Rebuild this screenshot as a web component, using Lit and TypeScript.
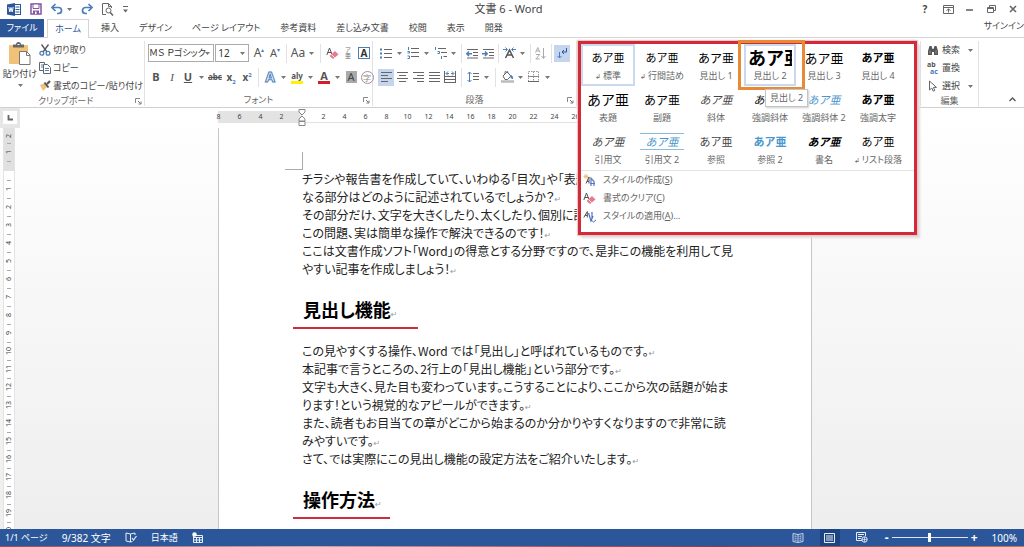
import { LitElement, html, svg, css, nothing } from "lit";
import { customElement } from "lit/decorators.js";
import { classMap } from "lit/directives/class-map.js";

const icon = (w: number, h: number, body: unknown) =>
  html`<svg width=${w} height=${h} viewBox="0 0 ${w} ${h}" fill="none" stroke="#666" aria-hidden="true">${body}</svg>`;

const caret = html`<svg class="caret" width="5" height="3" viewBox="0 0 5 3" aria-hidden="true"><path d="M0 0h5L2.500 3z" fill="#777" /></svg>`;

const I = {
  word: icon(14, 13, svg`<rect x="6.500" y="1.500" width="7" height="10" fill="#fff" stroke="#2b579a"/><path d="M8.500 4h4M8.500 6.500h4M8.500 9h4" stroke="#2b579a"/><path d="M0 1.500 8 0v13L0 11.500z" fill="#2b579a" stroke="none"/><path d="m1.800 4 1 5 1.200-4.500L5.200 9l1-5" stroke="#fff"/>`),
  save: icon(12, 12, svg`<path d="M1 1h10v10H1z" stroke="#8356a6" stroke-width="1.500"/><path d="M3 1h6v4.500H3z" fill="#fff" stroke="#8356a6"/><path d="M3 7.500h6V11H3z" fill="#8356a6" stroke="none"/><path d="M5 8.500h1.500V11H5z" fill="#fff" stroke="none"/>`),
  undo: icon(12, 12, svg`<path d="M1.500 4.500h6a3 3 0 0 1 0 6H6" stroke="#4a7ebb" stroke-width="1.700"/><path d="M4.500 1 1 4.500 4.500 8" stroke="#4a7ebb" stroke-width="1.700"/>`),
  redo: icon(12, 12, svg`<path d="M10.500 4.500h-6a3 3 0 0 0 0 6H6" stroke="#4a7ebb" stroke-width="1.700"/><path d="M7.500 1 11 4.500 7.500 8" stroke="#4a7ebb" stroke-width="1.700"/>`),
  preview: icon(12, 13, svg`<path d="M4 11.500H.500v-11h6l3 3V5M6.500.500v3h3"/><circle cx="6.500" cy="7.500" r="2.500"/><path d="m8.300 9.500 2.700 3" stroke-width="1.600"/>`),
  more: icon(5, 7, svg`<path d="M0 .500h5"/><path d="M0 3.500h5L2.500 6.500z" fill="#666" stroke="none"/>`),
  opts: icon(11, 9, svg`<path d="M.500.500h10v8H.500zM.500 2.500h10M5.500 7.500V4M3.500 5.500l2-1.500 2 1.500"/>`),
  min: icon(7, 9, svg`<path d="M0 5h7" stroke-width="1.600"/>`),
  restore: icon(9, 8, svg`<path d="M.500 2.500h6v5h-6zM2.500 2.500v-2h6v5h-2"/><path d="M.500 3.500h6"/>`),
  close: icon(8, 8, svg`<path d="m1 1 6 6M7 1 1 7" stroke-width="1.600"/>`),
  paste: icon(24, 24, svg`<rect x="1" y="3" width="19" height="19" rx="1" fill="#efc277" stroke="none"/><path d="M5 5.500v-3h3a2.500 2.500 0 0 1 5 0h3v3z" fill="#666" stroke="none"/><path d="M9.500 2.500h2" stroke="#fff"/><path d="M11.500 9.500h7l3.500 3.500v9.500H11.500z" fill="#fff" stroke="#777"/><path d="M18.500 9.500v4H22" stroke="#777"/>`),
  cut: icon(12, 12, svg`<path d="M2.500.500 8 8M9.500.500 4 8" stroke="#555" stroke-width="1.300"/><circle cx="2.800" cy="9.300" r="1.900" stroke="#4a7ebb" stroke-width="1.300"/><circle cx="9" cy="9.300" r="1.900" stroke="#4a7ebb" stroke-width="1.300"/>`),
  copy: icon(12, 12, svg`<path d="M.500.500h5v8h-5z" fill="#fff"/><path d="M2 3h2M2 5h2" stroke="#4a7ebb"/><path d="M4.500 2.500h4l3 3v6h-7z" fill="#fff"/><path d="M6 6.500h4M6 8.500h4" stroke="#4a7ebb"/>`),
  brush: icon(12, 12, svg`<path d="M1 5 6 3l2 4-4 4z" fill="#efc277" stroke="none"/><path d="m5.500 2.500 4 5" stroke="#555" stroke-width="2"/><path d="m8 4 3-3" stroke="#555" stroke-width="2.200"/>`),
  clear: icon(13, 13, svg`<path d="m.800 8 2.700-7 2.700 7M1.700 5.500h3.600" stroke="#555"/><path d="m3.500 9 5.500-5 3.500 3.500-5.500 4.500z" fill="#e8798f" stroke="none"/><path d="m5.300 7.300 3.500 3.500" stroke="#fff" stroke-width=".800"/>`),
  bullets: icon(12, 11, svg`<path d="M0 1.500h2M0 5.500h2M0 9.500h2" stroke="#4a7ebb" stroke-width="2"/><path d="M4 1.500h8M4 5.500h8M4 9.500h8"/>`),
  numbers: icon(12, 12, svg`<path d="M1.500 0v3M.500 4.500h2v1.500h-2M.500 9h2v2.500h-2" stroke="#4a7ebb"/><path d="M4 1.500h8M4 5.500h8M4 9.500h8"/>`),
  multi: icon(13, 12, svg`<path d="M1.500 0v3M3.500 4.500h2v2h-2M7.500 9v3" stroke="#4a7ebb"/><path d="M4 1.500h8M7 5.500h6M9.500 9.500h3.500"/>`),
  outdent: icon(12, 11, svg`<path d="M1 1.500h11M7 4.500h5M7 7.500h5M1 10h11"/><path d="M6 5.800H1M3 3.500.800 5.800 3 8" stroke="#4a7ebb" stroke-width="1.500"/>`),
  indent: icon(12, 11, svg`<path d="M1 1.500h11M7 4.500h5M7 7.500h5M1 10h11"/><path d="M0 5.800h5M3 3.500l2.200 2.300L3 8" stroke="#4a7ebb" stroke-width="1.500"/>`),
  asian: icon(13, 12, svg`<path d="m2.500 11 4-8 4 8M4 8h5" stroke="#555" stroke-width="1.500"/><path d="M0 2.500h4M2.500.500 4.500 2.500 2.500 4.500M13 2.500H9M10.500.500 8.500 2.500l2 2" stroke="#4a7ebb"/>`),
  sort: icon(12, 13, svg`<path d="m.500 5.500 2.300-5 2.200 5M1.300 4h3M.800 7.500h4l-4 4.500h4" stroke="#aaa"/><path d="M8.500 1v10M6.500 9l2 2.500 2-2.500" stroke="#aaa"/>`),
  marks: icon(12, 12, svg`<path d="M10.500 1v4H6M8 3 6 5l2 2" stroke="#2b579a"/><path d="M3.500 5v6M1.500 9l2 2 2-2" stroke="#4a7ebb"/>`),
  left: icon(11, 11, svg`<path d="M0 .500h11M0 3.500h7M0 6.500h11M0 9.500h7"/>`),
  center: icon(11, 11, svg`<path d="M0 .500h11M2 3.500h7M0 6.500h11M2 9.500h7"/>`),
  right: icon(11, 11, svg`<path d="M0 .500h11M4 3.500h7M0 6.500h11M4 9.500h7"/>`),
  justify: icon(11, 11, svg`<path d="M0 .500h11M0 3.500h11M0 6.500h11M0 9.500h11"/>`),
  distribute: icon(12, 12, svg`<path d="M.500 0v12M11.500 0v12M1 5.500h10M1 8.500h10M1 11.500h10"/><path d="M2.500 2.500h2.500M7 2.500h2.500M4 .500l-2 2 2 2M8 .500l2 2-2 2" stroke="#4a7ebb"/>`),
  spacing: icon(12, 12, svg`<path d="M2.500 1v10M.500 3l2-2 2 2M.500 9l2 2 2-2" stroke="#4a7ebb"/><path d="M6 2.500h6M6 5.500h6M6 8.500h6"/>`),
  shade: icon(13, 12, svg`<path d="m2 5 4-4 4 4-3.500 3.500H4z" fill="#fff"/><path d="M4 3V1.500a1.500 1.500 0 0 1 3 0"/><path d="M9 4.500c2 0 3 1 2.500 3.500L10 6.500z" fill="#4a7ebb" stroke="#4a7ebb"/><path d="M0 10.500h13" stroke="#bbb" stroke-width="2.500"/>`),
  borders: icon(12, 12, svg`<path d="M.500.500h10v10H.500zM5.500.500v10" stroke="#999" stroke-dasharray="1.500 1"/><path d="M0 5.500h11" stroke="#888"/><path d="M0 10.500h11" stroke="#666"/>`),
  launcher: icon(7, 7, svg`<path d="M.500 5V.500H5" stroke="#888"/><path d="m3 3 2.500 2.500M6 3.500V6H3.500" stroke="#777"/>`),
  find: icon(12, 11, svg`<path d="M1 10V6l1.500-5h2L5.500 4h1L7.500 1h2L11 6v4H7V7H5v3z" fill="#555" stroke="none"/><path d="M3 5.500v3M9 5.500v3" stroke="#aaa" stroke-width=".800"/>`),
  select: icon(9, 12, svg`<path d="M1 1v9l2.300-2 1.500 3.200 1.500-.700L5 7.400h3z"/>`),
  up: icon(7, 5, svg`<path d="m.500 4 3-3 3 3" stroke="#555" stroke-width="1.300"/>`),
  newStyle: icon(13, 13, svg`<path d="M3 0v5M.500 2.500h5M1 .800 5 4M5 .800 1 4" stroke="#eab765" stroke-width=".800"/><path d="m3 9.500 3-6.500v6.500M4 7.500h2" stroke="#555"/><path d="M8 12V4l3 3.500V12M7 9.500h5" stroke="#5a78c0" stroke-width="1.200"/>`),
  applyStyle: icon(13, 13, svg`<path d="m.800 7.500 3.500-6v6M2 5.500h2.300" stroke="#555"/><path d="M5.500 3 8 11l2-5M9 2v7" stroke="#4a6fc0" stroke-width="1.200"/><path d="m8 10 2.500 2L13 10" stroke="#4a6fc0"/>`),
  tabstop: icon(6, 6, svg`<path d="M1.500 0v4.500H6" stroke="#666" stroke-width="1.800"/>`),
  hanging: icon(8, 18, svg`<path d="M1 .500h6v2.500L4 6 1 3zM1 12v-2l3-3 3 3v2zM1 12.500h6v4H1z" fill="#fff" stroke="#888"/>`),
  proof: icon(12, 11, svg`<path d="M5.500 2 1 1v8l4.500 1zV10M5.500 2l4.500-1v2M5.500 10l2-.500" stroke="#e8eef8"/><path d="m7 6 1.500 2 3-4" stroke="#e8eef8" stroke-width="1.200"/>`),
  macro: icon(11, 11, svg`<path d="M1.500 3.500h9v7h-9zM1.500 5.500h9M4.500 5.500v5M7.500 5.500v5M2 8h8" stroke="#e8eef8"/><circle cx="2.500" cy="2.500" r="2.200" fill="#fff" stroke="none"/>`),
  read: icon(12, 10, svg`<path d="M6 1.500 1 .500v8l5 1 5-1v-8zV9.500M2.500 3l2 .300M2.500 5l2 .300M2.500 7l2 .300M9.500 3l-2 .300M9.500 5l-2 .300M9.500 7l-2 .300" stroke="#c9d6ec"/>`),
  print: icon(11, 10, svg`<path d="M.500.500h10v9H.500zM2 3h7M2 5h7M2 7h7" stroke="#e8eef8"/>`),
  web: icon(12, 11, svg`<path d="M6 8.500H.500v-8h9V4M2 2.500h6M2 4.500h4M2 6.500h3" stroke="#e8eef8"/><circle cx="8.500" cy="7.500" r="2.700" fill="#2b579a" stroke="#e8eef8"/><path d="M6 7.500h5M8.500 5v5" stroke="#e8eef8" stroke-width=".700"/>`),
};

type Tool = { label: string; body: unknown; drop?: boolean; on?: boolean; sep?: boolean };
const t = (label: string, body: unknown, extra: Partial<Tool> = {}): Tool => ({ label, body, ...extra });

const fontRow1: Tool[] = [
  t("フォント サイズの拡大", html`<span class="ltr">A<sup class="tick">▴</sup></span>`),
  t("フォント サイズの縮小", html`<span class="ltr small">A<sup class="tick">▾</sup></span>`, { sep: true }),
  t("文字種の変換", html`<span class="ltr">Aa</span>`, { drop: true, sep: true }),
  t("書式のクリア", I.clear),
  t("ルビ", html`<span class="ruby"><i>ア</i><i>亜</i></span>`),
  t("囲み線", html`<span class="boxed">A</span>`),
];
const fontRow2: Tool[] = [
  t("太字", html`<b class="ltr small">B</b>`),
  t("斜体", html`<i class="ltr small serif">I</i>`),
  t("下線", html`<u class="ltr small"><b>U</b></u>`, { drop: true }),
  t("取り消し線", html`<s class="abc">abc</s>`),
  t("下付き", html`<span class="xs">x<sub>2</sub></span>`),
  t("上付き", html`<span class="xs">x<sup>2</sup></span>`, { sep: true }),
  t("文字の効果", html`<span class="ltr fx">A</span>`, { drop: true }),
  t("蛍光ペン", html`<span class="abc bar yellow">aly</span>`, { drop: true }),
  t("フォントの色", html`<span class="abc bar red">A</span>`, { drop: true }),
  t("文字の網かけ", html`<span class="shaded">A</span>`),
  t("囲い文字", html`<span class="circled">字</span>`),
];
const paraRow1: Tool[] = [
  t("箇条書き", I.bullets, { drop: true }),
  t("段落番号", I.numbers, { drop: true }),
  t("アウトライン", I.multi, { drop: true, sep: true }),
  t("インデントを減らす", I.outdent),
  t("インデントを増やす", I.indent, { sep: true }),
  t("拡張書式", I.asian, { drop: true, sep: true }),
  t("並べ替え", I.sort, { sep: true }),
  t("編集記号の表示", I.marks, { on: true }),
];
const paraRow2: Tool[] = [
  t("左揃え", I.left, { on: true }),
  t("中央揃え", I.center),
  t("右揃え", I.right),
  t("両端揃え", I.justify),
  t("均等割り付け", I.distribute, { sep: true }),
  t("行間", I.spacing, { drop: true, sep: true }),
  t("塗りつぶし", I.shade, { drop: true }),
  t("罫線", I.borders, { drop: true }),
];

const gallery: [string, string][] = [
  ["標準", "current linked"], ["行間詰め", "linked"], ["見出し 1", "big"], ["見出し 2", "huge hover"], ["見出し 3", "wide"], ["見出し 4", "bold"],
  ["表題", "title"], ["副題", "big"], ["斜体", "ital grey"], ["強調斜体", "ital"], ["強調斜体 2", "ital blue"], ["強調太字", "bold"],
  ["引用文", "ital grey"], ["引用文 2", "ital blue ruled"], ["参照", "grey"], ["参照 2", "blue bold"], ["書名", "bold ital"], ["リスト段落", "linked"],
];

const intro: [string, boolean][] = [
  ["チラシや報告書を作成していて、いわゆる「目次」や「表題", false],
  ["なる部分はどのように記述されているでしょうか？", true],
  ["その部分だけ、文字を大きくしたり、太くしたり、個別に設定", false],
  ["この問題、実は簡単な操作で解決できるのです！", true],
  ["ここは文書作成ソフト「Word」の得意とする分野ですので、是非この機能を利用して見", false],
  ["やすい記事を作成しましょう！", true],
];
const detail: [string, boolean][] = [
  ["この見やすくする操作、Word では「見出し」と呼ばれているものです。", true],
  ["本記事で言うところの、2行上の「見出し機能」という部分です。", true],
  ["文字も大きく、見た目も変わっています。こうすることにより、ここから次の話題が始ま", false],
  ["ります！という視覚的なアピールができます。", true],
  ["また、読者もお目当ての章がどこから始まるのか分かりやすくなりますので非常に読", false],
  ["みやすいです。", true],
  ["さて、では実際にこの見出し機能の設定方法をご紹介いたします。", true],
];

@customElement("app-root")
export class AppRoot extends LitElement {
  static styles = css`
    :host { display: flex; flex-direction: column; height: 100vh; overflow: hidden; background: #fff; color: #444;
      font: 9px/14px "Noto Sans", "Noto Sans CJK JP", sans-serif; font-feature-settings: "palt"; white-space: nowrap; }
    * { box-sizing: border-box; }
    button { font: inherit; font-feature-settings: inherit; color: inherit; background: none; border: 0; padding: 0; margin: 0; white-space: nowrap; }
    svg { display: block; flex: none; }
    h1, h2, p { margin: 0; font-weight: 400; }

    .titlebar { display: grid; grid-template-columns: 1fr auto 1fr; align-items: center; height: 18px; padding: 0 7px; flex: none; }
    .quick, .window { display: flex; align-items: center; }
    .quick { gap: 9px; }
    .quick .pair { display: flex; align-items: center; gap: 4px; }
    .window { justify-content: flex-end; gap: 14px; }
    .window button { display: grid; place-items: center; width: 8px; font-size: 10px; }
    .titlebar h1 { font-size: 11px; line-height: 18px; padding-right: 7px; }

    .tabs { display: flex; align-items: stretch; height: 20px; flex: none; border-bottom: 1px solid #d5d5d5; padding-top: 1px; }
    .tabs .file { width: 44px; background: #2b579a; color: #fff; }
    .tabs .home { width: 42px; margin: 0 12px -1px 3px; border: 1px solid #d5d5d5; border-bottom: 0; color: #2b579a; background: #fff; }
    .tabs .rest { display: flex; gap: 20px; flex: 1; }
    .tabs .signin { color: #444; text-decoration: none; }

    .ribbon { display: flex; height: 70px; flex: none; border-bottom: 1px solid #d0d0d0; padding: 3px 0 1px; }
    .group { display: flex; flex-direction: column; border-right: 1px solid #e2e2e2; flex: none; }
    .group .content { flex: 1; }
    .group .foot { display: grid; grid-template-columns: 1fr auto 1fr; align-items: center; height: 12px; line-height: 12px; color: #666; }
    .group .foot button { grid-column: 3; justify-self: end; margin-right: 2px; }
    .group .foot span { grid-column: 2; }
    .clip { width: 145px; }
    .clip .content { display: flex; gap: 1px; padding-left: 2px; }
    .clip .foot { grid-template-columns: 3fr auto 4fr; }
    .paste { display: flex; flex-direction: column; align-items: center; width: 36px; padding-top: 1px; }
    .paste span { margin: 1px 0 3px; }
    .stack { display: flex; flex-direction: column; }
    .stack button { display: flex; align-items: center; gap: 2px; height: 18px; line-height: 18px; }
    .stack .caret { margin-left: 5px; }
    .font { width: 228px; }
    .para { width: 204px; }
    .tools { display: flex; align-items: center; height: 24px; }
    .font .tools { padding-left: 3px; }
    .para .tools { padding-left: 5px; }
    .tool { display: flex; align-items: center; height: 17px; flex: none; }
    .tool .face { display: grid; place-items: center; width: 16px; height: 17px; }
    .tool.on .face { background: #c5d5ee; }
    .tool .caret { margin: 0 3px; }
    .rule { width: 1px; height: 19px; background: #e2e2e2; margin: 0 3px; flex: none; }
    .para .tools:first-child .rule { margin: 0 2px; }
    .combo { position: relative; display: flex; align-items: center; border: 1px solid #ababab; height: 18px; margin-right: 1px; }
    .combo select { appearance: none; border: 0; background: none; font: inherit; font-feature-settings: inherit; color: #333; width: 100%; height: 16px; padding: 0 2px; outline: 0; }
    .combo .caret { position: absolute; right: 3px; pointer-events: none; }
    .family { width: 69px; }
    .family select { padding: 0; }
    .size { width: 35px; margin-right: 2px; font-size: 10px; }
    .ltr { font-size: 12px; line-height: 16px; color: #555; }
    .small { font-size: 11px; }
    .serif { font-family: "Liberation Serif", serif; }
    .tick { font-size: 6px; line-height: 1px; color: #4a7ebb; }
    .abc { font-size: 9px; font-weight: 700; line-height: 12px; color: #555; }
    s.abc { font-size: 8px; }
    .xs { font-size: 10px; font-weight: 700; line-height: 12px; color: #555; }
    .xs sub, .xs sup { font-size: 6px; line-height: 1px; color: #4a7ebb; }
    .fx { color: #fff; font-size: 14px; font-weight: 700; -webkit-text-stroke: 1px #4a7ebb; }
    .bar { width: 12px; text-align: center; line-height: 10px; border-bottom: 3px solid; }
    .yellow { border-color: #fff200; font-size: 8px; }
    .red { border-color: #d0202c; font-size: 11px; }
    .shaded { width: 11px; line-height: 12px; text-align: center; background: #aaa; color: #444; font-size: 11px; }
    .boxed { width: 12px; line-height: 10px; text-align: center; border: 1px solid #4a7ebb; color: #333; font-size: 10px; font-weight: 700; }
    .circled { width: 13px; height: 13px; line-height: 11px; text-align: center; border: 1px solid #a98aa5; border-radius: 50%; font-size: 8px; color: #888; }
    .ruby { display: grid; line-height: 6px; font-size: 6px; color: #777; }
    .ruby i { font-style: normal; }
    .styles { position: relative; flex: 1; min-width: 343px; border-right: 1px solid #e2e2e2; }
    .edit { width: 58px; padding-left: 6px; }
    .edit .foot { margin-left: -6px; }
    .edit .stack button, .edit.group .stack button { gap: 3px; }
    .edit .stack button svg:first-child { width: 12px; }
    .edit .replace { font-size: 7px; line-height: 7px; width: 12px; text-align: left; color: #555; font-weight: 700; display: grid; }
    .edit .replace i { font-style: normal; color: #4a7ebb; padding-left: 3px; }
    .collapse { align-self: flex-end; width: 45px; display: grid; justify-content: end; padding: 0 8px 4px 0; }

    .dropdown { position: absolute; z-index: 5; top: 0; left: 1px; width: 339px; border: 3px solid #cf2b38; box-shadow: 0 0 1px 1px #f3c4c8, 3px 3px 2px #ddd; background: #fff; padding-bottom: 7px; }
    .grid { display: grid; grid-template-columns: repeat(6, 54px); grid-auto-rows: 42px; border-bottom: 1px solid #e4e4e4; }
    .cell { position: relative; display: flex; flex-direction: column; align-items: center; border: 2px solid transparent; }
    .cell .sample { width: 44px; height: 23px; line-height: 23px; font-size: 11px; color: #000; overflow: hidden; font-feature-settings: normal; text-align: center; font-family: "Noto Sans CJK JP", sans-serif; }
    .cell .name { color: #666; line-height: 14px; }
    .cell.linked .name::before { content: "↲ "; font-size: 7px; }
    .cell.current { border-color: #ccd8f0; }
    .cell.hover { border-color: #ccd8f0; margin: 0 1px; }
    .cell.big .sample { font-size: 12px; }
    .cell.wide .sample { font-size: 13px; }
    .cell.title .sample { font-size: 14px; }
    .cell.huge .sample { font-size: 18px; font-weight: 700; text-align: left; }
    .cell.bold .sample { font-weight: 700; }
    .cell.ital .sample { font-style: italic; }
    .cell.grey .sample { color: #444; }
    .cell.blue .sample { color: #4a96cc; }
    .cell.ruled .sample { border: solid #8dbbdc; border-width: 1px 0; height: 17px; line-height: 15px; margin: 3px 0; }
    .marker { position: absolute; left: 157px; top: -4px; width: 67px; height: 50px; border: 3px solid #e88a33; pointer-events: none; }
    .tip { position: absolute; left: 184px; top: 45px; padding: 0 4px; line-height: 16px; border: 1px solid #c4c4c4; background: #fff; color: #666; box-shadow: 1px 1px 2px #ccc; }
    .menu { display: grid; padding-left: 2px; }
    .menu button { display: flex; align-items: center; gap: 7px; height: 18px; line-height: 18px; color: #666; }

    .workspace { flex: 1; min-height: 0; display: grid; grid-template-columns: 218px minmax(0, 594px) 1fr; grid-template-rows: 20px 1fr; background: linear-gradient(#fff, #eee); }
    .corner { width: 20px; background: #e6e6e6; padding: 3px; }
    .corner button { display: grid; place-items: center; width: 14px; height: 13px; background: #fff; }
    .hruler { grid-column: 2 / 3; display: flex; position: relative; height: 12px; margin-top: 3px; font-size: 7px; line-height: 12px; background: #fff; border-bottom: 1px solid #e3e3e3; overflow: visible; }
    .hruler span { width: 21px; margin-left: -10px; margin-right: 10px; text-align: center; flex: none; }
    .hruler .margin { display: flex; width: 84px; background: #e3e3e3; flex: none; }
    .hruler .indent { width: 0; }
    .hruler .indent svg { margin: -2px 0 0 -4px; position: relative; }
    .hruler .on { display: flex; flex: 1; overflow: hidden; padding-left: 21px; }
    .side { overflow: hidden; min-height: 0; }
    .vruler { width: 12px; margin-left: 3px; background: #fff; border: solid #e3e3e3; border-width: 0 1px; font-size: 7px; }
    .vruler .top { background: #e0e0e0; height: 43px; overflow: hidden; display: flex; flex-direction: column; }
    .vruler i { display: grid; place-items: center; height: 18px; flex: none; font-style: normal; writing-mode: sideways-lr; line-height: 10px; position: relative; }
    .vruler i::before { content: ""; position: absolute; left: 3px; top: 0; width: 4px; height: 1px; background: #aaa; }
    .vruler .top i:first-child { height: 15px; }
    .vruler .top i:first-child::before { display: none; }
    .vruler .down { padding-top: 9px; }
    .page { background: #fff; border: solid #c6c6c6; border-width: 0 1px; padding: 24px 84px 0 66px; overflow: hidden; color: #222; font-family: "Noto Sans CJK JP", sans-serif; }
    .crop { width: 18px; height: 18px; border: solid #aaa; border-width: 0 1px 1px 0; }
    .body { padding-left: 17px; font-size: 12px; line-height: 18px; }
    .body i { font: 8px/10px "DejaVu Sans", sans-serif; color: #999; }
    .page h2 { color: #000; font-size: 18px; font-weight: 700; line-height: 32px; padding: 15px 0 0 18px; }
    .page h2 i { font: 8px/10px "DejaVu Sans", sans-serif; color: #999; }
    .page h2 span { display: inline-block; margin-left: -10px; padding: 0 8px 2px 10px; border-bottom: 2px solid #c9303c; }
    .page h2 .long { padding-right: 20px; }
    .detail { padding-top: 13px; }

    .status { display: flex; align-items: center; height: 17px; flex: none; background: #2b579a; color: #fff; padding: 0 7px 0 5px; gap: 14px; }
    .status .push { flex: 1; }
    .status .view { display: grid; place-items: center; width: 20px; height: 17px; margin: 0 -1px; }
    .status .view.on { background: #1c4480; }
    .status .percent { font-size: 10px; }
    .status .here { font-size: 10px; }
    .zoom { display: flex; align-items: center; gap: 3px; }
    .zoom b { font-size: 12px; line-height: 14px; }
    .zoom input { appearance: none; width: 76px; height: 12px; margin: 0; background: linear-gradient(#dbe4f2, #dbe4f2) center / 100% 1px no-repeat; }
    .zoom input::-webkit-slider-thumb { appearance: none; width: 3px; height: 9px; background: #fff; }
    .edge { height: 1px; flex: none; background: linear-gradient(90deg, #a04a52, #c9a5ae 30%, #b0525a 55%, #8a3c50 70%, #c77a4a); }
  `;

  private tools(list: Tool[]) {
    return list.map((x) => html`
      <button class=${classMap({ tool: true, on: !!x.on })} aria-label=${x.label}><span class="face">${x.body}</span>${x.drop ? caret : nothing}</button>
      ${x.sep ? html`<span class="rule"></span>` : nothing}`);
  }

  private lines(list: [string, boolean][]) {
    return list.map(([text, end]) => html`<p>${text}${end ? html`<i>↵</i>` : nothing}</p>`);
  }

  private foot(name: string, launch = true) {
    return html`<div class="foot"><span>${name}</span>${launch ? html`<button aria-label="${name}の設定">${I.launcher}</button>` : nothing}</div>`;
  }

  private renderDropdown() {
    return html`<div class="dropdown">
      <div class="grid">
        ${gallery.map(([name, kind]) => html`<button class="cell ${kind}"><span class="sample">あア亜</span><span class="name">${name}</span></button>`)}
      </div>
      <div class="menu">
        <button>${I.newStyle}<span>スタイルの作成(<u>S</u>)</span></button>
        <button>${I.clear}<span>書式のクリア(<u>C</u>)</span></button>
        <button>${I.applyStyle}<span>スタイルの適用(<u>A</u>)...</span></button>
      </div>
      <div class="marker"></div>
      <div class="tip" role="tooltip">見出し 2</div>
    </div>`;
  }

  render() {
    return html`
      <header class="titlebar">
        <div class="quick">
          ${I.word}
          <button aria-label="上書き保存">${I.save}</button>
          <button class="pair" aria-label="元に戻す">${I.undo}${caret}</button>
          <button aria-label="やり直し">${I.redo}</button>
          <button aria-label="印刷プレビュー">${I.preview}</button>
          <button aria-label="カスタマイズ">${I.more}</button>
        </div>
        <h1>文書 6 - Word</h1>
        <div class="window">
          <button aria-label="ヘルプ"><b>?</b></button>
          <button aria-label="リボンの表示オプション">${I.opts}</button>
          <button aria-label="最小化">${I.min}</button>
          <button aria-label="元のサイズに戻す">${I.restore}</button>
          <button aria-label="閉じる">${I.close}</button>
        </div>
      </header>
      <nav class="tabs">
        <button class="file">ファイル</button>
        <button class="home">ホーム</button>
        <div class="rest">
          ${["挿入", "デザイン", "ページ レイアウト", "参考資料", "差し込み文書", "校閲", "表示", "開発"].map((n) => html`<button>${n}</button>`)}
        </div>
        <a class="signin" href="#">サインイン</a>
      </nav>
      <section class="ribbon">
        <div class="group clip">
          <div class="content">
            <button class="paste">${I.paste}<span>貼り付け</span>${caret}</button>
            <div class="stack">
              <button>${I.cut}切り取り</button>
              <button>${I.copy}コピー</button>
              <button>${I.brush}書式のコピー/貼り付け</button>
            </div>
          </div>
          ${this.foot("クリップボード")}
        </div>
        <div class="group font">
          <div class="content">
            <div class="tools">
              <label class="combo family"><select aria-label="フォント"><option>ＭＳ Ｐゴシック</option></select>${caret}</label>
              <label class="combo size"><select aria-label="フォント サイズ"><option>12</option></select>${caret}</label>
              ${this.tools(fontRow1)}
            </div>
            <div class="tools">${this.tools(fontRow2)}</div>
          </div>
          ${this.foot("フォント")}
        </div>
        <div class="group para">
          <div class="content">
            <div class="tools">${this.tools(paraRow1)}</div>
            <div class="tools">${this.tools(paraRow2)}</div>
          </div>
          ${this.foot("段落")}
        </div>
        <div class="styles">${this.renderDropdown()}</div>
        <div class="group edit">
          <div class="content stack">
            <button>${I.find}検索${caret}</button>
            <button><span class="replace">ab<i>ac</i></span>置換</button>
            <button>${I.select}選択${caret}</button>
          </div>
          ${this.foot("編集", false)}
        </div>
        <button class="collapse" aria-label="リボンを折りたたむ">${I.up}</button>
      </section>
      <main class="workspace">
        <div class="corner"><button aria-label="タブ">${I.tabstop}</button></div>
        <div class="hruler">
          <div class="margin">${[8, 6, 4, 2].map((n) => html`<span>${n}</span>`)}</div>
          <div class="indent">${I.hanging}</div>
          <div class="on">${Array.from({ length: 13 }, (_, i) => html`<span>${i * 2 + 2}</span>`)}</div>
        </div>
        <div></div>
        <div class="side">
          <div class="vruler">
            <div class="top"><i>2</i><i>1</i><i></i></div>
            <div class="down">${Array.from({ length: 20 }, (_, i) => html`<i>${i + 1}</i>`)}</div>
          </div>
        </div>
        <article class="page">
          <div class="crop"></div>
          <div class="body intro">${this.lines(intro)}</div>
          <h2><span class="long">見出し機能<i>↵</i></span></h2>
          <div class="body detail">${this.lines(detail)}</div>
          <h2><span>操作方法<i>↵</i></span></h2>
        </article>
      </main>
      <footer class="status">
        <span>1/1 ページ</span><span class="here">9/382 文字</span>${I.proof}<span>日本語</span>${I.macro}
        <span class="push"></span>
        <button class="view" aria-label="閲覧モード">${I.read}</button>
        <button class="view on" aria-label="印刷レイアウト">${I.print}</button>
        <button class="view" aria-label="Web レイアウト">${I.web}</button>
        <div class="zoom"><b>-</b><input type="range" aria-label="ズーム" min="0" max="200" value="100" /><b>+</b></div>
        <span class="percent">100%</span>
      </footer>
      <div class="edge"></div>`;
  }
}
